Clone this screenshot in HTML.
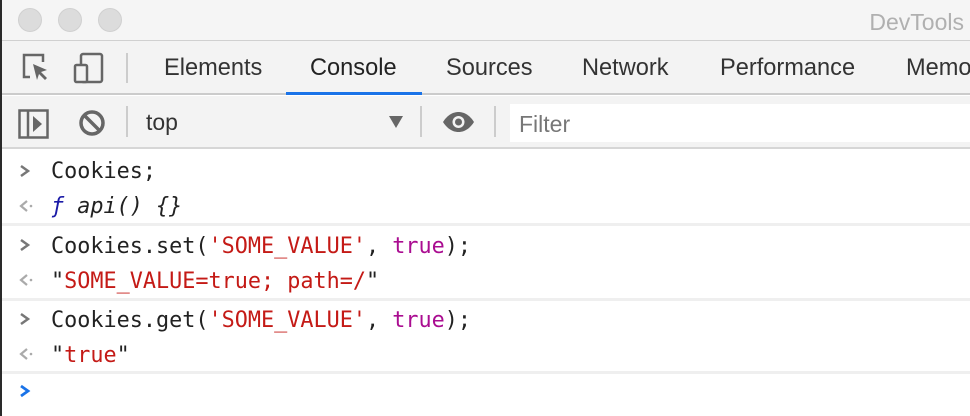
<!DOCTYPE html>
<html><head><style>
*{margin:0;padding:0;box-sizing:border-box}
body{width:970px;height:416px;overflow:hidden;background:#fff;font-family:"Liberation Sans",Helvetica,sans-serif;position:relative}
.edge{position:absolute;left:0;top:0;width:2px;height:416px;background:#2a2a2a;z-index:5}
.title{position:absolute;left:0;top:0;width:970px;height:41px;background:#f5f5f5;border-bottom:1px solid #d0d0d0}
.dot{position:absolute;top:8px;width:24px;height:24px;border-radius:50%;background:#dcdcdc;border:1px solid #d0d0d0}
.dt{position:absolute;right:6px;top:9px;font-size:23px;color:#b0b0b0}
.tabs{position:absolute;left:0;top:41px;width:970px;height:54px;background:#f3f3f3;border-bottom:2px solid #cbcbcb}
.tab{position:absolute;top:14px;font-size:23.6px;color:#333}
.ul{position:absolute;left:286px;top:51px;width:136px;height:3px;background:#1a73e8}
.sep{position:absolute;width:2px;background:#ccc}
.tb{position:absolute;left:0;top:96px;width:970px;height:53px;background:#f3f3f3;border-bottom:2px solid #d6d6d6}
.filter{position:absolute;left:510px;top:8px;width:460px;height:38px;background:#fff;font-size:23px;color:#777;padding:7px 0 0 9px}
.con{position:absolute;left:0;top:151px;width:970px;font-family:"DejaVu Sans Mono","Liberation Mono",monospace;font-size:21.8px;color:#222}
.row{position:absolute;left:51px;white-space:pre}
.ar{position:absolute;left:19px}
.hl{position:absolute;left:0;width:970px;height:3px;background:#efefef}
.s{color:#c41a16}.k{color:#aa0d91}
</style></head><body>
<div class="edge"></div>
<div class="title">
<div class="dot" style="left:18px"></div><div class="dot" style="left:58px"></div><div class="dot" style="left:98px"></div>
<div class="dt">DevTools</div>
</div>
<div class="tabs">
<svg style="position:absolute;left:20px;top:10px" width="32" height="34" viewBox="0 0 32 34"><path d="M14 4H4v22h6" fill="none" stroke="#666" stroke-width="2.5"/><path d="M14 4h9v7" fill="none" stroke="#666" stroke-width="2.5"/><path d="M13 13l14 6-6 2 6 6-2 2-6-6-2 6z" fill="#666"/></svg>
<svg style="position:absolute;left:73px;top:10px" width="32" height="34" viewBox="0 0 32 34"><rect x="8" y="3" width="21" height="28" rx="2" fill="none" stroke="#666" stroke-width="2.5"/><rect x="2" y="14" width="12" height="17" rx="1.5" fill="#f3f3f3" stroke="#666" stroke-width="2.5"/></svg>
<div class="sep" style="left:126px;top:12px;height:30px"></div>
<div class="tab" style="left:164px">Elements</div>
<div class="tab" style="left:310px;color:#222">Console</div>
<div class="tab" style="left:446px">Sources</div>
<div class="tab" style="left:582px">Network</div>
<div class="tab" style="left:720px">Performance</div>
<div class="tab" style="left:906px">Memory</div>
<div class="ul"></div>
</div>
<div class="tb">
<svg style="position:absolute;left:18px;top:13px" width="32" height="30" viewBox="0 0 32 30"><rect x="1.5" y="1.5" width="28" height="27" fill="none" stroke="#666" stroke-width="2.5"/><line x1="10" y1="1" x2="10" y2="29" stroke="#666" stroke-width="2.5"/><path d="M15 7l9 8-9 8z" fill="#666"/></svg>
<svg style="position:absolute;left:78px;top:13px" width="28" height="28" viewBox="0 0 28 28"><circle cx="14" cy="14" r="11" fill="none" stroke="#666" stroke-width="3.5"/><line x1="6" y1="6" x2="22" y2="22" stroke="#666" stroke-width="3.5"/></svg>
<div class="sep" style="left:126px;top:10px;height:31px"></div>
<div style="position:absolute;left:146px;top:13px;font-size:23px;color:#333">top</div>
<div style="position:absolute;left:389px;top:20px;width:0;height:0;border-left:7px solid transparent;border-right:7px solid transparent;border-top:12px solid #666"></div>
<div class="sep" style="left:420px;top:10px;height:31px"></div>
<svg style="position:absolute;left:442px;top:15px" width="33" height="22" viewBox="0 0 33 22"><path d="M1 11C6 3 12 1 16.5 1S27 3 32 11C27 19 21 21 16.5 21S6 19 1 11z" fill="#666"/><circle cx="16.5" cy="11" r="6" fill="#f3f3f3"/><circle cx="16.5" cy="11" r="3.5" fill="#666"/></svg>
<div class="sep" style="left:494px;top:10px;height:31px"></div>
<div class="filter">Filter</div>
</div>
<div class="con">
<svg class="ar" style="top:13px" width="12" height="14" viewBox="0 0 12 14"><path d="M2 2l7 5-7 5" fill="none" stroke="#777" stroke-width="2.5"/></svg>
<div class="row" style="top:8px">Cookies;</div>
<svg class="ar" style="top:48px" width="14" height="14" viewBox="0 0 14 14"><path d="M8 2L2 7l6 5" fill="none" stroke="#aaa" stroke-width="2.2"/><circle cx="12" cy="7" r="1.3" fill="#aaa"/></svg>
<div class="row" style="top:43px;font-style:italic"><span style="color:#1a1aa6">ƒ</span> api() {}</div>
<div class="hl" style="top:72px"></div>
<svg class="ar" style="top:87px" width="12" height="14" viewBox="0 0 12 14"><path d="M2 2l7 5-7 5" fill="none" stroke="#777" stroke-width="2.5"/></svg>
<div class="row" style="top:83px">Cookies.set(<span class="s">'SOME_VALUE'</span>, <span class="k">true</span>);</div>
<svg class="ar" style="top:122px" width="14" height="14" viewBox="0 0 14 14"><path d="M8 2L2 7l6 5" fill="none" stroke="#aaa" stroke-width="2.2"/><circle cx="12" cy="7" r="1.3" fill="#aaa"/></svg>
<div class="row" style="top:118px">"<span class="s">SOME_VALUE=true; path=/</span>"</div>
<div class="hl" style="top:147px"></div>
<svg class="ar" style="top:161px" width="12" height="14" viewBox="0 0 12 14"><path d="M2 2l7 5-7 5" fill="none" stroke="#777" stroke-width="2.5"/></svg>
<div class="row" style="top:157px">Cookies.get(<span class="s">'SOME_VALUE'</span>, <span class="k">true</span>);</div>
<svg class="ar" style="top:196px" width="14" height="14" viewBox="0 0 14 14"><path d="M8 2L2 7l6 5" fill="none" stroke="#aaa" stroke-width="2.2"/><circle cx="12" cy="7" r="1.3" fill="#aaa"/></svg>
<div class="row" style="top:192px">"<span class="s">true</span>"</div>
<div class="hl" style="top:220px"></div>
<svg class="ar" style="top:233px" width="12" height="14" viewBox="0 0 12 14"><path d="M2 2l7 5-7 5" fill="none" stroke="#1a73e8" stroke-width="2.8"/></svg>
</div>
</body></html>
